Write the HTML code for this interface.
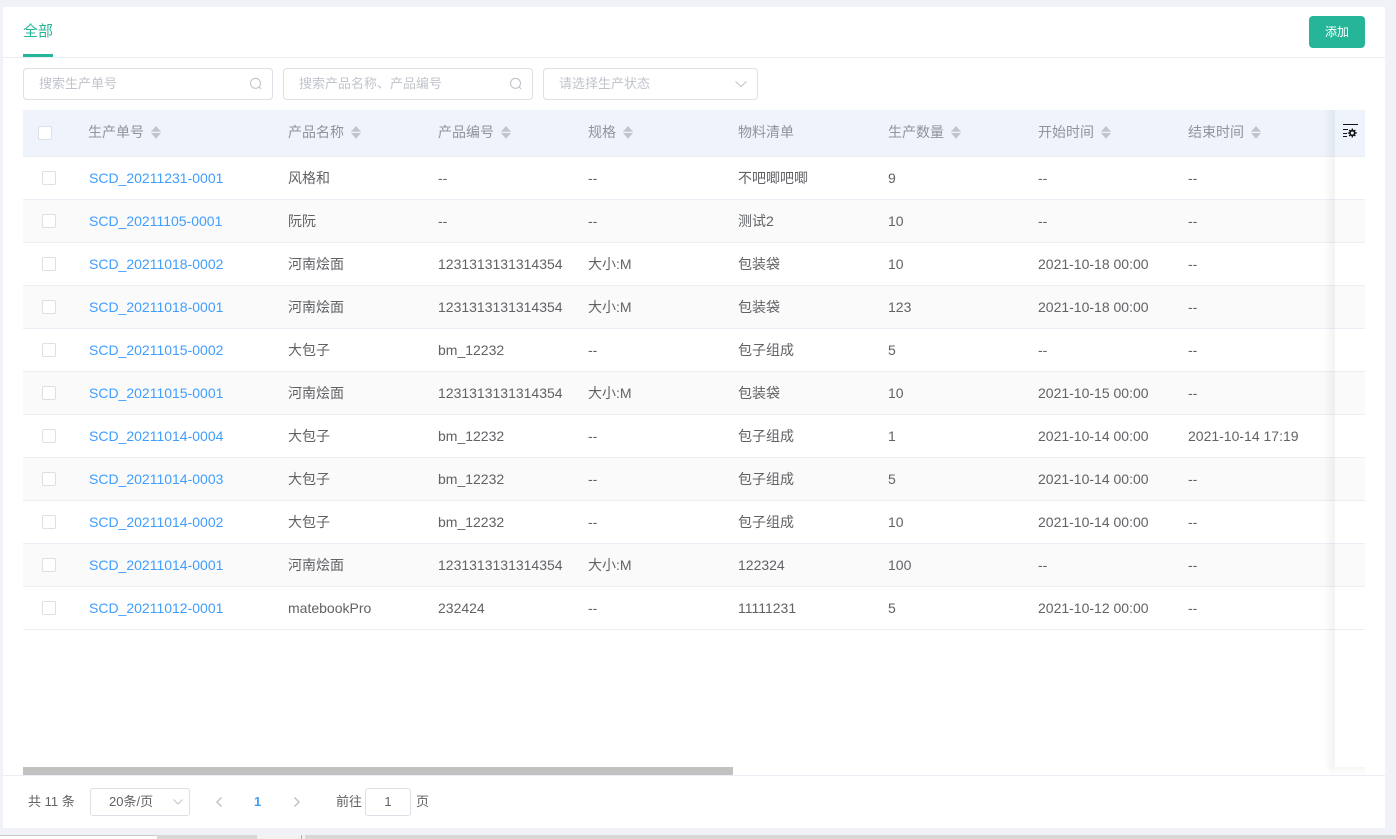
<!DOCTYPE html>
<html lang="zh">
<head>
<meta charset="utf-8">
<style>
*{box-sizing:border-box}
html,body{margin:0;padding:0;width:1396px;height:839px;overflow:hidden;background:#f0f2f7;font-family:"Liberation Sans","Noto Sans CJK SC",sans-serif;font-size:14px;color:#606266}
.abs{position:absolute}
#card{left:3px;top:7px;width:1382px;height:821px;background:#fff}
.inp{position:absolute;top:68px;height:32px;background:#fff;border:1px solid #dcdfe6;border-radius:4px;font-size:13px;color:#c0c4cc;line-height:30px;padding-left:15px}
.hd{position:absolute;left:23px;top:110px;width:1342px;height:47px;background:#eef3fc;border-bottom:1px solid #ebeef5}
.th{position:absolute;top:110px;height:46px;line-height:45px;font-size:14px;color:#909399;white-space:nowrap}
.sort{position:absolute;top:126px;width:10px;height:13px}
.row{position:absolute;left:23px;width:1342px;height:43px;border-bottom:1px solid #ebeef5;background:#fff}
.row.alt{background:#fafafa}
.td{position:absolute;line-height:43px;height:43px;white-space:nowrap;font-size:14px;color:#606266}
.lnk{color:#409eff}
.cb{position:absolute;width:14px;height:14px;border:1px solid #dcdfe6;border-radius:2px;background:#fff}
</style>
</head>
<body>
<div class="abs" id="card"></div>
<div class="abs" style="left:3px;top:57px;width:1382px;height:1px;background:#ebeef5"></div>
<div class="abs" style="left:23px;top:21px;font-size:15px;line-height:22px;color:#26b598">全部</div>
<div class="abs" style="left:23px;top:54px;width:30px;height:3px;background:#26b598"></div>
<div class="abs" style="left:1309px;top:16px;width:56px;height:32px;background:#26b598;border-radius:4px;color:#fff;font-size:12px;line-height:32px;text-align:center">添加</div>

<div class="inp" style="left:23px;width:250px">搜索生产单号</div>
<svg class="abs" style="left:249px;top:77px" width="14" height="14" viewBox="0 0 14 14" fill="none" stroke="#c0c4cc" stroke-width="1.1"><circle cx="6.500" cy="6.300" r="5"/><path d="M10.200 10l2 2"/></svg>
<div class="inp" style="left:283px;width:250px">搜索产品名称、产品编号</div>
<svg class="abs" style="left:509px;top:77px" width="14" height="14" viewBox="0 0 14 14" fill="none" stroke="#c0c4cc" stroke-width="1.1"><circle cx="6.500" cy="6.300" r="5"/><path d="M10.200 10l2 2"/></svg>
<div class="inp" style="left:543px;width:215px">请选择生产状态</div>
<svg class="abs" style="left:734px;top:79px" width="14" height="10" viewBox="0 0 14 10" fill="none" stroke="#c0c4cc" stroke-width="1.1"><path d="M1.500 2.500L7 7.500l5.500-5"/></svg>

<div class="hd"></div>
<div class="cb" style="left:38px;top:126px"></div>
<div class="th" style="left:88px">生产单号</div>
<div class="th" style="left:288px">产品名称</div>
<div class="th" style="left:438px">产品编号</div>
<div class="th" style="left:588px">规格</div>
<div class="th" style="left:738px">物料清单</div>
<div class="th" style="left:888px">生产数量</div>
<div class="th" style="left:1038px">开始时间</div>
<div class="th" style="left:1188px">结束时间</div>
<svg class="sort" style="left:151px" viewBox="0 0 10 13" fill="#c0c4cc"><path d="M5 0l5 5.800H0zM0 7h10l-5 5.800z"/></svg>
<svg class="sort" style="left:351px" viewBox="0 0 10 13" fill="#c0c4cc"><path d="M5 0l5 5.800H0zM0 7h10l-5 5.800z"/></svg>
<svg class="sort" style="left:501px" viewBox="0 0 10 13" fill="#c0c4cc"><path d="M5 0l5 5.800H0zM0 7h10l-5 5.800z"/></svg>
<svg class="sort" style="left:623px" viewBox="0 0 10 13" fill="#c0c4cc"><path d="M5 0l5 5.800H0zM0 7h10l-5 5.800z"/></svg>
<svg class="sort" style="left:951px" viewBox="0 0 10 13" fill="#c0c4cc"><path d="M5 0l5 5.800H0zM0 7h10l-5 5.800z"/></svg>
<svg class="sort" style="left:1101px" viewBox="0 0 10 13" fill="#c0c4cc"><path d="M5 0l5 5.800H0zM0 7h10l-5 5.800z"/></svg>
<svg class="sort" style="left:1251px" viewBox="0 0 10 13" fill="#c0c4cc"><path d="M5 0l5 5.800H0zM0 7h10l-5 5.800z"/></svg>

<div class="row" style="top:157px"></div>
<div class="row alt" style="top:200px"></div>
<div class="row" style="top:243px"></div>
<div class="row alt" style="top:286px"></div>
<div class="row" style="top:329px"></div>
<div class="row alt" style="top:372px"></div>
<div class="row" style="top:415px"></div>
<div class="row alt" style="top:458px"></div>
<div class="row" style="top:501px"></div>
<div class="row alt" style="top:544px"></div>
<div class="row" style="top:587px"></div>

<div class="cb" style="left:42px;top:171px"></div><div class="td lnk" style="left:89px;top:157px">SCD_20211231-0001</div><div class="td" style="left:288px;top:157px">风格和</div><div class="td" style="left:438px;top:157px">--</div><div class="td" style="left:588px;top:157px">--</div><div class="td" style="left:738px;top:157px">不吧唧吧唧</div><div class="td" style="left:888px;top:157px">9</div><div class="td" style="left:1038px;top:157px">--</div><div class="td" style="left:1188px;top:157px">--</div>

<div class="cb" style="left:42px;top:214px"></div><div class="td lnk" style="left:89px;top:200px">SCD_20211105-0001</div><div class="td" style="left:288px;top:200px">阮阮</div><div class="td" style="left:438px;top:200px">--</div><div class="td" style="left:588px;top:200px">--</div><div class="td" style="left:738px;top:200px">测试2</div><div class="td" style="left:888px;top:200px">10</div><div class="td" style="left:1038px;top:200px">--</div><div class="td" style="left:1188px;top:200px">--</div>

<div class="cb" style="left:42px;top:257px"></div><div class="td lnk" style="left:89px;top:243px">SCD_20211018-0002</div><div class="td" style="left:288px;top:243px">河南烩面</div><div class="td" style="left:438px;top:243px">1231313131314354</div><div class="td" style="left:588px;top:243px">大小:M</div><div class="td" style="left:738px;top:243px">包装袋</div><div class="td" style="left:888px;top:243px">10</div><div class="td" style="left:1038px;top:243px">2021-10-18 00:00</div><div class="td" style="left:1188px;top:243px">--</div>

<div class="cb" style="left:42px;top:300px"></div><div class="td lnk" style="left:89px;top:286px">SCD_20211018-0001</div><div class="td" style="left:288px;top:286px">河南烩面</div><div class="td" style="left:438px;top:286px">1231313131314354</div><div class="td" style="left:588px;top:286px">大小:M</div><div class="td" style="left:738px;top:286px">包装袋</div><div class="td" style="left:888px;top:286px">123</div><div class="td" style="left:1038px;top:286px">2021-10-18 00:00</div><div class="td" style="left:1188px;top:286px">--</div>

<div class="cb" style="left:42px;top:343px"></div><div class="td lnk" style="left:89px;top:329px">SCD_20211015-0002</div><div class="td" style="left:288px;top:329px">大包子</div><div class="td" style="left:438px;top:329px">bm_12232</div><div class="td" style="left:588px;top:329px">--</div><div class="td" style="left:738px;top:329px">包子组成</div><div class="td" style="left:888px;top:329px">5</div><div class="td" style="left:1038px;top:329px">--</div><div class="td" style="left:1188px;top:329px">--</div>

<div class="cb" style="left:42px;top:386px"></div><div class="td lnk" style="left:89px;top:372px">SCD_20211015-0001</div><div class="td" style="left:288px;top:372px">河南烩面</div><div class="td" style="left:438px;top:372px">1231313131314354</div><div class="td" style="left:588px;top:372px">大小:M</div><div class="td" style="left:738px;top:372px">包装袋</div><div class="td" style="left:888px;top:372px">10</div><div class="td" style="left:1038px;top:372px">2021-10-15 00:00</div><div class="td" style="left:1188px;top:372px">--</div>

<div class="cb" style="left:42px;top:429px"></div><div class="td lnk" style="left:89px;top:415px">SCD_20211014-0004</div><div class="td" style="left:288px;top:415px">大包子</div><div class="td" style="left:438px;top:415px">bm_12232</div><div class="td" style="left:588px;top:415px">--</div><div class="td" style="left:738px;top:415px">包子组成</div><div class="td" style="left:888px;top:415px">1</div><div class="td" style="left:1038px;top:415px">2021-10-14 00:00</div><div class="td" style="left:1188px;top:415px">2021-10-14 17:19</div>

<div class="cb" style="left:42px;top:472px"></div><div class="td lnk" style="left:89px;top:458px">SCD_20211014-0003</div><div class="td" style="left:288px;top:458px">大包子</div><div class="td" style="left:438px;top:458px">bm_12232</div><div class="td" style="left:588px;top:458px">--</div><div class="td" style="left:738px;top:458px">包子组成</div><div class="td" style="left:888px;top:458px">5</div><div class="td" style="left:1038px;top:458px">2021-10-14 00:00</div><div class="td" style="left:1188px;top:458px">--</div>

<div class="cb" style="left:42px;top:515px"></div><div class="td lnk" style="left:89px;top:501px">SCD_20211014-0002</div><div class="td" style="left:288px;top:501px">大包子</div><div class="td" style="left:438px;top:501px">bm_12232</div><div class="td" style="left:588px;top:501px">--</div><div class="td" style="left:738px;top:501px">包子组成</div><div class="td" style="left:888px;top:501px">10</div><div class="td" style="left:1038px;top:501px">2021-10-14 00:00</div><div class="td" style="left:1188px;top:501px">--</div>

<div class="cb" style="left:42px;top:558px"></div><div class="td lnk" style="left:89px;top:544px">SCD_20211014-0001</div><div class="td" style="left:288px;top:544px">河南烩面</div><div class="td" style="left:438px;top:544px">1231313131314354</div><div class="td" style="left:588px;top:544px">大小:M</div><div class="td" style="left:738px;top:544px">122324</div><div class="td" style="left:888px;top:544px">100</div><div class="td" style="left:1038px;top:544px">--</div><div class="td" style="left:1188px;top:544px">--</div>

<div class="cb" style="left:42px;top:601px"></div><div class="td lnk" style="left:89px;top:587px">SCD_20211012-0001</div><div class="td" style="left:288px;top:587px">matebookPro</div><div class="td" style="left:438px;top:587px">232424</div><div class="td" style="left:588px;top:587px">--</div><div class="td" style="left:738px;top:587px">11111231</div><div class="td" style="left:888px;top:587px">5</div><div class="td" style="left:1038px;top:587px">2021-10-12 00:00</div><div class="td" style="left:1188px;top:587px">--</div>

<!-- fixed right column: shadows only, rows show through -->
<div class="abs" style="left:1323px;top:110px;width:12px;height:657px;background:linear-gradient(to right,rgba(0,0,0,0),rgba(0,0,0,.05))"></div>
<div class="abs" style="left:1329px;top:767px;width:36px;height:8px;background:linear-gradient(to bottom,rgba(0,0,0,.035),rgba(0,0,0,0))"></div>
<svg class="abs" style="left:1342px;top:124px" width="17" height="16" viewBox="0 0 17 16" fill="none" stroke="#111" stroke-width="1"><path d="M1 0.500h15M1 5.500h5M1 9.500h4M1 12.500h4"/><circle cx="10.300" cy="9" r="2.400" stroke-width="1.700"/><path d="M10.300 4.500v2M10.300 11.500v2M5.800 9h2M12.800 9h2M7.200 5.900l1.300 1.300M12.100 10.800l1.300 1.300M13.400 5.900l-1.300 1.300M8.500 10.800l-1.300 1.300" stroke-width="1.300"/></svg>

<!-- scrollbar -->
<div class="abs" style="left:23px;top:767px;width:710px;height:8px;background:#c1c1c1"></div>
<div class="abs" style="left:3px;top:775px;width:1382px;height:1px;background:#ebeef5"></div>

<!-- pagination -->
<div class="abs" style="left:28px;top:792px;font-size:13px;line-height:20px;color:#606266">共 11 条</div>
<div class="abs" style="left:90px;top:788px;width:100px;height:28px;border:1px solid #dcdfe6;border-radius:3px;font-size:13px;line-height:26px;color:#606266;padding-left:18px;background:#fff">20条/页</div>
<svg class="abs" style="left:172px;top:798px" width="12" height="8" viewBox="0 0 12 8" fill="none" stroke="#c0c4cc" stroke-width="1"><path d="M1.500 1.500L6 6l4.500-4.500"/></svg>
<svg class="abs" style="left:214px;top:795px" width="10" height="14" viewBox="0 0 10 14" fill="none" stroke="#c0c4cc" stroke-width="1.500"><path d="M7.500 2.500L3 7l4.500 4.500"/></svg>
<div class="abs" style="left:254px;top:792px;font-size:13px;line-height:20px;font-weight:bold;color:#409eff">1</div>
<svg class="abs" style="left:292px;top:795px" width="10" height="14" viewBox="0 0 10 14" fill="none" stroke="#c0c4cc" stroke-width="1.500"><path d="M2.500 2.500L7 7l-4.500 4.500"/></svg>
<div class="abs" style="left:336px;top:792px;font-size:13px;line-height:20px;color:#606266">前往</div>
<div class="abs" style="left:365px;top:788px;width:46px;height:28px;border:1px solid #dcdfe6;border-radius:3px;font-size:13px;line-height:26px;text-align:center;color:#606266;background:#fff">1</div>
<div class="abs" style="left:416px;top:792px;font-size:13px;line-height:20px;color:#606266">页</div>

<!-- bottom strip -->
<div class="abs" style="left:0;top:835px;width:1396px;height:4px;background:#d8d8d8"></div>
<div class="abs" style="left:0;top:835px;width:157px;height:4px;background:#fff;border-top:1px solid #c8c8c8"></div>
<div class="abs" style="left:257px;top:835px;width:48px;height:4px;background:#f1f1f1"></div>
<div class="abs" style="left:301px;top:835px;width:1px;height:4px;background:#aaa"></div>
</body>
</html>
